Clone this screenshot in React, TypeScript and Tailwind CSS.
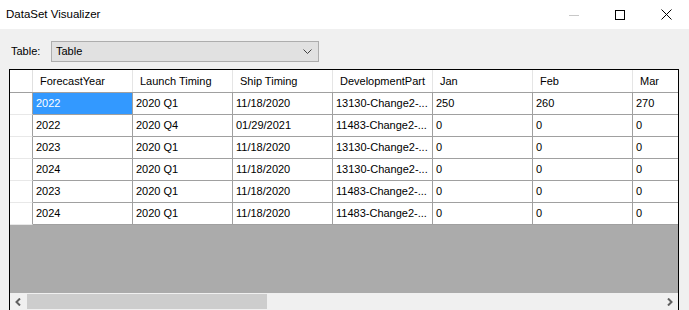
import React from "react";

const cols = ["ForecastYear", "Launch Timing", "Ship Timing", "DevelopmentPart", "Jan", "Feb", "Mar"];
const rows: string[][] = [
  ["2022", "2020 Q1", "11/18/2020", "13130-Change2-...", "250", "260", "270"],
  ["2022", "2020 Q4", "01/29/2021", "11483-Change2-...", "0", "0", "0"],
  ["2023", "2020 Q1", "11/18/2020", "13130-Change2-...", "0", "0", "0"],
  ["2024", "2020 Q1", "11/18/2020", "13130-Change2-...", "0", "0", "0"],
  ["2023", "2020 Q1", "11/18/2020", "11483-Change2-...", "0", "0", "0"],
  ["2024", "2020 Q1", "11/18/2020", "11483-Change2-...", "0", "0", "0"],
];

export default function App() {
  return (
    <div
      className="w-[689px] h-[310px] overflow-hidden bg-[#f0f0f0] flex flex-col text-black"
      style={{ fontFamily: '"Liberation Sans", Arial, sans-serif' }}
    >
      {/* Title bar */}
      <div className="h-[29px] shrink-0 bg-white flex items-center">
        <div className="pl-[6px] text-[11.5px] flex-1">DataSet Visualizer</div>
        <div className="flex h-full">
          <div className="w-[46px] h-full flex items-center justify-center">
            <svg width="10" height="10" viewBox="0 0 10 10">
              <line x1="0" y1="5.5" x2="10" y2="5.5" stroke="#c8c8c8" strokeWidth="1" />
            </svg>
          </div>
          <div className="w-[46px] h-full flex items-center justify-center">
            <svg width="10" height="10" viewBox="0 0 10 10">
              <rect x="0.5" y="0.5" width="9" height="9" fill="none" stroke="#000" strokeWidth="1" />
            </svg>
          </div>
          <div className="w-[46px] h-full flex items-center justify-center">
            <svg width="11" height="11" viewBox="0 0 11 11">
              <path d="M0.5 0.5 L10.5 10.5 M10.5 0.5 L0.5 10.5" stroke="#000" strokeWidth="1" />
            </svg>
          </div>
        </div>
      </div>

      {/* Table selector */}
      <div className="h-[40px] shrink-0 flex items-start pt-[12px]">
        <div className="pl-[11px] w-[51px] h-[21px] flex items-center text-[11px]">Table:</div>
        <div className="w-[268px] h-[21px] border border-[#adadad] bg-[#e1e1e1] flex items-center justify-between pl-[4px] pr-[6px] text-[11px]">
          <span>Table</span>
          <svg width="9" height="5" viewBox="0 0 9 5">
            <path d="M0.5 0.5 L4.5 4.5 L8.5 0.5" fill="none" stroke="#404040" strokeWidth="1" />
          </svg>
        </div>
      </div>

      {/* Grid */}
      <div className="ml-[9px] w-[670px] flex-1 border-l border-t border-r border-black flex flex-col overflow-hidden">
        <div className="flex-1 bg-[#ababab] overflow-hidden flex flex-col">
          {/* header */}
          <div className="flex shrink-0 h-[23px] bg-white border-b border-[#a0a0a0] text-[11px]">
            <div className="w-[23px] shrink-0 border-r border-[#e0e0e0]" />
            {cols.map((c) => (
              <div
                key={c}
                className="w-[100px] shrink-0 border-r border-[#e5e5e5] flex items-center pl-[7px] whitespace-nowrap"
              >
                {c}
              </div>
            ))}
          </div>
          {rows.map((r, i) => (
            <div key={i} className="flex shrink-0 h-[22px] text-[11px]">
              <div className="w-[23px] shrink-0 bg-white border-r border-[#a0a0a0] border-b border-b-[#e8e8e8]" />
              {r.map((v, j) => {
                const sel = i === 0 && j === 0;
                return (
                  <div
                    key={j}
                    className={
                      "w-[100px] shrink-0 border-r border-b border-[#a0a0a0] flex items-center pl-[3px] whitespace-nowrap " +
                      (sel ? "bg-[#3399ff] text-white" : "bg-white")
                    }
                  >
                    {v}
                  </div>
                );
              })}
            </div>
          ))}
        </div>
        {/* horizontal scrollbar */}
        <div className="h-[17px] shrink-0 bg-[#f0f0f0] flex items-center">
          <div className="w-[17px] h-full flex items-center justify-center">
            <svg width="7" height="8" viewBox="0 0 7 8">
              <path d="M5 0.5 L1.5 4 L5 7.5" fill="none" stroke="#606060" strokeWidth="2" />
            </svg>
          </div>
          <div className="w-[240px] h-[15px] bg-[#cdcdcd]" />
          <div className="flex-1" />
          <div className="w-[17px] h-full flex items-center justify-center">
            <svg width="7" height="8" viewBox="0 0 7 8">
              <path d="M2 0.5 L5.5 4 L2 7.5" fill="none" stroke="#606060" strokeWidth="2" />
            </svg>
          </div>
        </div>
      </div>
    </div>
  );
}
